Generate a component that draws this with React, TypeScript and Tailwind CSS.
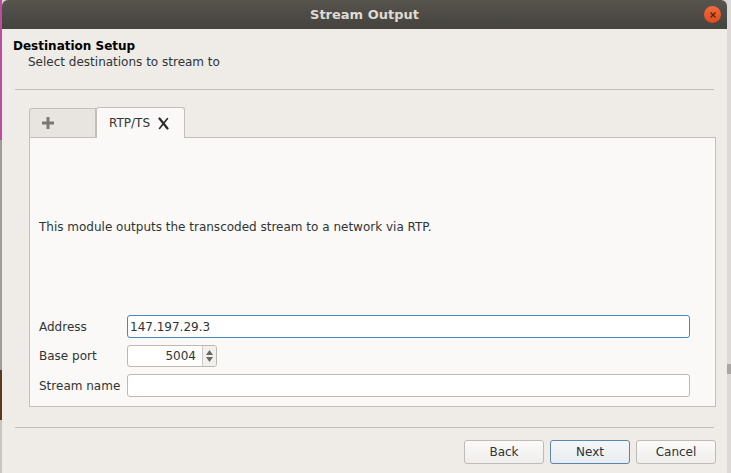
import React from 'react';

const font = { fontFamily: '"DejaVu Sans", "Liberation Sans", sans-serif' };

// 入力欄
const Field = ({ value, focused }: { value?: string; focused?: boolean }) => (
  <div
    className={
      'h-[23px] flex-1 rounded-[3px] bg-white px-[2px] flex items-center text-[12px] text-[#2e3436] ' +
      (focused ? 'border border-[#4a86c0]' : 'border border-[#bdb8b2]')
    }
  >
    {value}
  </div>
);

const Button = ({ label, active }: { label: string; active?: boolean }) => (
  <button
    className={
      'w-[80px] h-[24px] rounded-[3px] text-[12px] text-[#2e3436] ' +
      (active
        ? 'border border-[#5a86b0] bg-gradient-to-b from-[#f4f7f9] to-[#e8ecef]'
        : 'border border-[#c0bbb6] bg-gradient-to-b from-[#fbfaf9] to-[#f0eeec]')
    }
  >
    {label}
  </button>
);

const App = () => {
  return (
    <div className="w-[731px] h-[473px] flex bg-[#d8d6d4] overflow-hidden" style={font}>
      {/* 左端のデスクトップ */}
      <div className="w-[2px] flex flex-col">
        <div className="h-[140px] bg-[#b84fa0]" />
        <div className="h-[230px] bg-[#a09b96]" />
        <div className="h-[50px] bg-[#5b3a22]" />
        <div className="flex-1 bg-[#c9c5c1]" />
      </div>

      {/* ウィンドウ */}
      <div className="w-[725px] flex flex-col">
        <div className="h-[29px] rounded-t-[6px] bg-gradient-to-b from-[#57544e] to-[#45433e] flex items-center relative">
          <div className="flex-1 text-center text-[13px] font-bold text-[#dfdbd2]">Stream Output</div>
          <div className="absolute right-[6px] top-[6px] w-[17px] h-[17px] rounded-full bg-gradient-to-b from-[#f26b3a] to-[#de4a1c] flex items-center justify-center">
            <svg width="8" height="8" viewBox="0 0 8 8">
              <path d="M1.5 1.5 L6.5 6.5 M6.5 1.5 L1.5 6.5" stroke="#5a2410" strokeWidth="1.3" />
            </svg>
          </div>
        </div>

        <div className="flex-1 bg-[#efebe7] flex flex-col px-[11px] text-[#000]">
          <div className="pt-[10px] text-[12px] font-bold leading-[15px]">Destination Setup</div>
          <div className="pl-[15px] pt-[1px] text-[12px] leading-[15px] text-[#2e3436]">Select destinations to stream to</div>
          <div className="mt-[19px] mx-[2px] h-[1px] bg-[#c3beb8]" />

          {/* タブ */}
          <div className="mt-[16px] ml-[16px] flex flex-col">
            <div className="flex items-end h-[31px]">
              <div className="w-[67px] h-[29px] border border-b-0 border-[#c3beb8] rounded-tl-[3px] bg-[#e8e5e1] flex items-center pl-[11px]">
                <svg width="14" height="14" viewBox="0 0 14 14">
                  <path d="M5.5 1h3v4.5H13v3H8.5V13h-3V8.5H1v-3h4.5z" fill="#7a7774" />
                </svg>
              </div>
              <div className="w-[89px] h-[31px] border border-b-0 border-[#c3beb8] rounded-t-[3px] bg-[#fbf9f7] flex items-center pl-[12px] gap-[7px] text-[12px] text-[#2e3436] -mb-[1px] relative z-10">
                <span>RTP/TS</span>
                <svg width="13" height="13" viewBox="0 0 13 13">
                  <path d="M2.5 1.5 L10.5 11.5" stroke="#2a2a2a" strokeWidth="2.2" strokeLinecap="round" />
                  <path d="M10.5 1.5 L2.5 11.5" stroke="#2a2a2a" strokeWidth="1.6" strokeLinecap="round" />
                </svg>
              </div>
            </div>
            <div className="h-[270px] border border-[#c3beb8] bg-[#fbf9f7] flex flex-col px-[9px] text-[12px] text-[#2e3436]">
              <div className="pt-[82px] leading-[15px]">This module outputs the transcoded stream to a network via RTP.</div>
              <div className="mt-[80px] flex flex-col gap-[7px] pr-[16px]">
                <div className="flex items-center">
                  <span className="w-[88px]">Address</span>
                  <Field value="147.197.29.3" focused />
                </div>
                <div className="flex items-center">
                  <span className="w-[88px]">Base port</span>
                  <div className="w-[90px] h-[22px] rounded-[3px] border border-[#bdb8b2] bg-white flex items-center">
                    <span className="flex-1 text-right pr-[6px]">5004</span>
                    <div className="w-[14px] h-full border-l border-[#cfcac5] bg-[#f2f0ee] flex flex-col items-center justify-center gap-[2px] rounded-r-[3px]">
                      <svg width="7" height="5" viewBox="0 0 7 5"><path d="M0 5 L3.5 0 L7 5z" fill="#6a6763" /></svg>
                      <svg width="7" height="5" viewBox="0 0 7 5"><path d="M0 0 L3.5 5 L7 0z" fill="#6a6763" /></svg>
                    </div>
                  </div>
                </div>
                <div className="flex items-center">
                  <span className="w-[88px]">Stream name</span>
                  <Field />
                </div>
              </div>
            </div>
          </div>

          <div className="mt-[20px] mx-[2px] h-[1px] bg-[#c3beb8]" />
          <div className="mt-[12px] flex justify-end gap-[6px]">
            <Button label="Back" />
            <Button label="Next" active />
            <Button label="Cancel" />
          </div>
        </div>
      </div>

      {/* 右端 */}
      <div className="flex-1 flex flex-col bg-[#dcdad8]">
        <div className="h-[364px]" />
        <div className="h-[10px] bg-[#a9a7a5]" />
      </div>
    </div>
  );
};

export default App;
